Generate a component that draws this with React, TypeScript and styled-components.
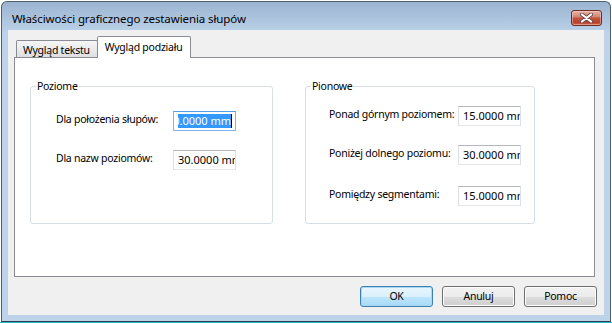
import React from "react";
import styled, { createGlobalStyle, css } from "styled-components";

const GlobalStyle = createGlobalStyle`
  html, body { margin: 0; padding: 0; background: #ffffff; }
  body {
    font-family: "Noto Sans", "DejaVu Sans", sans-serif;
    font-size: 10.5px;
    letter-spacing: -0.25px;
    color: #000;
  }
  * { box-sizing: border-box; }
`;

const Screen = styled.div`
  width: 612px;
  height: 323px;
  padding: 1px 1px 0 1px;
  background: #ffffff;
  border-bottom: 1px solid #2bb3c0;
`;

const Window = styled.div`
  width: 610px;
  height: 321px;
  border: 1px solid #4f5f70;
  border-bottom-color: #2f3f50;
  border-radius: 6px 6px 0 0;
  background: linear-gradient(to bottom, #9cb4d0 0px, #b6cde6 26px, #bdd3ea 30px, #bdd3ea 100%);
  display: flex;
  flex-direction: column;
  padding: 0 6px 6px 6px;
`;

const TitleBar = styled.div`
  height: 28px;
  display: flex;
  align-items: flex-start;
  justify-content: space-between;
`;

const Title = styled.div`
  padding: 10px 0 0 4px;
  font-size: 11.5px;
  letter-spacing: -0.1px;
  line-height: 14px;
  color: #000;
`;

const CloseButton = styled.div`
  width: 31px;
  height: 16px;
  margin: 8px 2px 0 0;
  border: 1px solid #6b2f2a;
  border-radius: 3px;
  background: linear-gradient(to bottom, #e6b0a3 0%, #d58a79 40%, #c45540 50%, #b9402c 80%, #c9624b 100%);
  box-shadow: inset 0 0 0 1px rgba(255, 220, 210, 0.45);
  display: flex;
  align-items: center;
  justify-content: center;
`;

const Client = styled.div`
  flex: 1;
  background: #f0f0f0;
  display: flex;
  flex-direction: column;
  padding: 6px 7px 8px 6px;
`;

const TabStrip = styled.div`
  height: 21px;
  display: flex;
  align-items: flex-end;
  padding-left: 2px;
  position: relative;
  z-index: 1;
`;

const Tab = styled.div<{ $active?: boolean }>`
  border: 1px solid #898c95;
  border-bottom: none;
  border-radius: 2px 2px 0 0;
  line-height: 14px;
  white-space: nowrap;
  ${(p) =>
    p.$active
      ? css`
          height: 22px;
          margin-bottom: -1px;
          padding: 3px 8px 0 7px;
          background: #ffffff;
          margin-left: -1px;
        `
      : css`
          height: 17px;
          padding: 2px 7px 0 6px;
          background: linear-gradient(to bottom, #f6f6f6 0%, #ebebeb 50%, #dedede 100%);
        `}
`;

const Panel = styled.div`
  height: 220px;
  margin-right: 2px;
  background: #ffffff;
  border: 1px solid #898c95;
  display: flex;
  align-items: flex-start;
  gap: 32px;
  padding: 21px 0 0 15px;
`;

const Group = styled.fieldset<{ $width: number }>`
  width: ${(p) => p.$width}px;
  height: 145px;
  margin: 0;
  padding: 0;
  border: 1px solid #d5dfe5;
  border-radius: 3px;
  min-width: 0;
`;

const Legend = styled.legend`
  margin-left: 5px;
  padding: 0 1px;
  line-height: 14px;
`;

const Rows = styled.div<{ $top: number; $left: number; $labelWidth: number }>`
  display: grid;
  grid-template-columns: ${(p) => p.$labelWidth}px 63px;
  padding: ${(p) => p.$top}px 0 0 ${(p) => p.$left}px;
`;

const Label = styled.div<{ $gap: number }>`
  margin-top: ${(p) => p.$gap + 1}px;
  line-height: 14px;
  white-space: nowrap;
`;

const TextBox = styled.div<{ $gap: number; $focused?: boolean }>`
  margin-top: ${(p) => p.$gap}px;
  height: 20px;
  border: 1px solid;
  border-color: ${(p) => (p.$focused ? "#569de5 #7eb4ea #7eb4ea #7eb4ea" : "#b3b7bd #dcdfe4 #e3e7ec #dcdfe4")};
  background: #ffffff;
  padding: 2px 0 2px 4px;
  display: flex;
  justify-content: ${(p) => (p.$focused ? "flex-end" : "flex-start")};
`;

const TextClip = styled.div<{ $focused?: boolean }>`
  flex: 1;
  overflow: hidden;
  display: flex;
  justify-content: ${(p) => (p.$focused ? "flex-end" : "flex-start")};
  padding-right: ${(p) => (p.$focused ? 3 : 0)}px;
  line-height: 14px;
  font-size: 11px;
  letter-spacing: 0;
  white-space: nowrap;
`;

const Selected = styled.span`
  background: #3399ff;
  color: #ffffff;
  border-right: 1px solid #000;
  flex-shrink: 0;
`;

const Plain = styled.span`
  flex-shrink: 0;
`;

const ButtonRow = styled.div`
  margin-top: 9px;
  height: 21px;
  display: flex;
  justify-content: flex-end;
  gap: 9px;
`;

const Button = styled.div<{ $default?: boolean }>`
  width: 73px;
  height: 21px;
  border: 1px solid ${(p) => (p.$default ? "#3c7fb1" : "#707070")};
  border-radius: 3px;
  display: flex;
  align-items: center;
  justify-content: center;
  line-height: 14px;
  padding-bottom: 1px;
  background: ${(p) =>
    p.$default
      ? "linear-gradient(to bottom, #eaf6fd 0%, #d9f0fc 50%, #bee6fd 50%, #a7d9f5 100%)"
      : "linear-gradient(to bottom, #f2f2f2 0%, #ebebeb 50%, #dddddd 50%, #cfcfcf 100%)"};
  box-shadow: inset 0 0 0 1px ${(p) => (p.$default ? "#a7d9f5" : "#fcfcfc")};
`;

type Row = { label: string; value: string; gap: number; focused?: boolean };

const leftRows: Row[] = [
  { label: "Dla położenia słupów:", value: "10.0000 mm", gap: 0, focused: true },
  { label: "Dla nazw poziomów:", value: "30.0000 mm", gap: 19 },
];

const rightRows: Row[] = [
  { label: "Ponad górnym poziomem:", value: "15.0000 mm", gap: 0 },
  { label: "Poniżej dolnego poziomu:", value: "30.0000 mm", gap: 19 },
  { label: "Pomiędzy segmentami:", value: "15.0000 mm", gap: 21 },
];

function renderRows(rows: Row[]) {
  return rows.map((r) => (
    <React.Fragment key={r.label}>
      <Label $gap={r.gap}>{r.label}</Label>
      <TextBox $gap={r.gap} $focused={r.focused}>
        <TextClip $focused={r.focused}>
          {r.focused ? <Selected>{r.value}</Selected> : <Plain>{r.value}</Plain>}
        </TextClip>
      </TextBox>
    </React.Fragment>
  ));
}

export default function App() {
  return (
    <>
      <GlobalStyle />
      <Screen>
        <Window>
          <TitleBar>
            <Title>Właściwości graficznego zestawienia słupów</Title>
            <CloseButton>
              <svg width="13" height="10" viewBox="0 0 13 10">
                <path d="M2 1.5 L11 8.5 M11 1.5 L2 8.5" stroke="#6a4a48" strokeWidth="4" strokeLinecap="round" fill="none" />
                <path d="M2 1.5 L11 8.5 M11 1.5 L2 8.5" stroke="#ffffff" strokeWidth="2.2" strokeLinecap="round" fill="none" />
              </svg>
            </CloseButton>
          </TitleBar>
          <Client>
            <TabStrip>
              <Tab>Wygląd tekstu</Tab>
              <Tab $active>Wygląd podziału</Tab>
            </TabStrip>
            <Panel>
              <Group $width={243}>
                <Legend>Poziome</Legend>
                <Rows $top={18} $left={25} $labelWidth={117}>
                  {renderRows(leftRows)}
                </Rows>
              </Group>
              <Group $width={230}>
                <Legend>Pionowe</Legend>
                <Rows $top={13} $left={23} $labelWidth={129}>
                  {renderRows(rightRows)}
                </Rows>
              </Group>
            </Panel>
            <ButtonRow>
              <Button $default>OK</Button>
              <Button>Anuluj</Button>
              <Button>Pomoc</Button>
            </ButtonRow>
          </Client>
        </Window>
      </Screen>
    </>
  );
}
